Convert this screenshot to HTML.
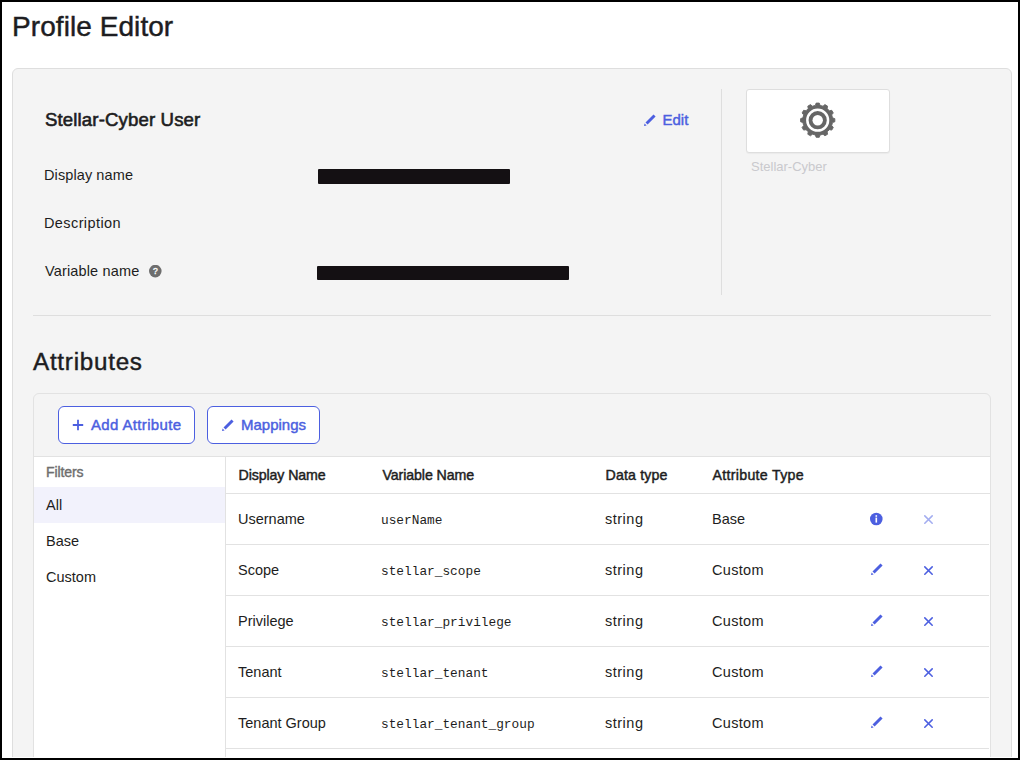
<!DOCTYPE html>
<html><head><meta charset="utf-8"><title>Profile Editor</title>
<style>
html,body{margin:0;padding:0;}
body{width:1020px;height:760px;overflow:hidden;position:relative;background:#000;font-family:"Liberation Sans", sans-serif;}
#frame{position:absolute;left:2px;top:2px;width:1016px;height:756px;background:#fff;overflow:hidden;}
#in{position:absolute;left:-2px;top:-2px;width:1020px;height:760px;}
.t{position:absolute;white-space:pre;}
</style></head><body>
<div id="frame"><div id="in">
<div style="position:absolute;left:12px;top:68px;width:1000px;height:697px;box-sizing:border-box;background:#f4f4f4;border:1px solid #dedede;border-radius:6px;"></div>
<div class="t" style="left:12px;top:8.80px;font-size:28px;line-height:35px;font-weight:400;color:#1d1d21;font-family:'Liberation Sans', sans-serif;letter-spacing:0.07px;-webkit-text-stroke:0.45px #1d1d21;">Profile Editor</div>
<div class="t" style="left:45px;top:108.06px;font-size:18.6px;line-height:23px;font-weight:400;color:#1d1d21;font-family:'Liberation Sans', sans-serif;letter-spacing:0.14px;-webkit-text-stroke:0.6px #1d1d21;">Stellar-Cyber User</div>
<svg style="position:absolute;left:643.3px;top:113.8px" width="14" height="13" viewBox="0 0 14 13"><path d="M1 12 L1.6 9.4 L3.6 11.4 Z M2.5 8.5 L10.5 0.5 L12.6 2.6 L4.6 10.6 Z" fill="#4c5fe0"/></svg>
<div class="t" style="left:662.5px;top:110.30px;font-size:15px;line-height:19px;font-weight:400;color:#4c5fe0;font-family:'Liberation Sans', sans-serif;-webkit-text-stroke:0.45px #4c5fe0;">Edit</div>
<div class="t" style="left:44px;top:165.58px;font-size:14.5px;line-height:18px;font-weight:400;color:#1d1d21;font-family:'Liberation Sans', sans-serif;letter-spacing:0.1px;">Display name</div>
<div class="t" style="left:44px;top:213.98px;font-size:14.5px;line-height:18px;font-weight:400;color:#1d1d21;font-family:'Liberation Sans', sans-serif;letter-spacing:0.4px;">Description</div>
<div class="t" style="left:45px;top:261.78px;font-size:14.5px;line-height:18px;font-weight:400;color:#1d1d21;font-family:'Liberation Sans', sans-serif;letter-spacing:0.15px;">Variable name</div>
<svg style="position:absolute;left:149px;top:265px" width="13" height="13" viewBox="0 0 13 13"><circle cx="6.3" cy="6.1" r="6.3" fill="#6e6e6e"/><text x="6.4" y="9.1" text-anchor="middle" font-family="Liberation Sans" font-weight="400" font-size="8.6" stroke="#fff" stroke-width="0.35" fill="#fff">?</text></svg>
<div style="position:absolute;left:318px;top:169px;width:192px;height:15px;background:#141013;border-radius:1px;"></div>
<div style="position:absolute;left:317px;top:266px;width:252px;height:14px;background:#141013;border-radius:1px;"></div>
<div style="position:absolute;left:721px;top:89px;width:1px;height:206px;background:#dedede;"></div>
<div style="position:absolute;left:746px;top:89px;width:144px;height:64px;box-sizing:border-box;background:#fff;border:1px solid #dedede;border-radius:3px;box-shadow:0 1px 1px rgba(0,0,0,0.04);"></div>
<svg style="position:absolute;left:780px;top:82px" width="76" height="76" viewBox="0 0 76 76"><path d="M35.31 23.39 L36.15 21.07 L39.25 21.07 L40.09 23.39 L43.03 24.18 L44.93 22.59 L47.60 24.14 L47.17 26.57 L49.33 28.73 L51.76 28.30 L53.31 30.97 L51.72 32.87 L52.51 35.81 L54.83 36.65 L54.83 39.75 L52.51 40.59 L51.72 43.53 L53.31 45.43 L51.76 48.10 L49.33 47.67 L47.17 49.83 L47.60 52.26 L44.93 53.81 L43.03 52.22 L40.09 53.01 L39.25 55.33 L36.15 55.33 L35.31 53.01 L32.37 52.22 L30.47 53.81 L27.80 52.26 L28.23 49.83 L26.07 47.67 L23.64 48.10 L22.09 45.43 L23.68 43.53 L22.89 40.59 L20.57 39.75 L20.57 36.65 L22.89 35.81 L23.68 32.87 L22.09 30.97 L23.64 28.30 L26.07 28.73 L28.23 26.57 L27.80 24.14 L30.47 22.59 L32.37 24.18 Z" fill="#666" stroke="#666" stroke-width="0.9" stroke-linejoin="round"/><circle cx="37.700000000000045" cy="38.2" r="10.35" fill="none" stroke="#fff" stroke-width="2.5"/><circle cx="37.700000000000045" cy="38.2" r="5.2" fill="#fff"/></svg>
<div class="t" style="left:751px;top:158.50px;font-size:13px;line-height:16px;font-weight:400;color:#c9c9cd;font-family:'Liberation Sans', sans-serif;">Stellar-Cyber</div>
<div style="position:absolute;left:33px;top:315px;width:958px;height:1px;background:#dedede;"></div>
<div class="t" style="left:33px;top:346.61px;font-size:24.2px;line-height:30px;font-weight:400;color:#1d1d21;font-family:'Liberation Sans', sans-serif;letter-spacing:0.75px;-webkit-text-stroke:0.45px #1d1d21;">Attributes</div>
<div style="position:absolute;left:33px;top:393px;width:958px;height:372px;box-sizing:border-box;background:#f4f4f4;border:1px solid #e2e2e2;border-radius:6px;"></div>
<div style="position:absolute;left:34px;top:456px;width:956px;height:1px;background:#e2e2e2;"></div>
<div style="position:absolute;left:58px;top:406px;width:137px;height:38px;box-sizing:border-box;background:#fff;border:1px solid #4c5fe0;border-radius:6px;"></div>
<div style="position:absolute;left:207px;top:406px;width:113px;height:38px;box-sizing:border-box;background:#fff;border:1px solid #4c5fe0;border-radius:6px;"></div>
<svg style="position:absolute;left:72px;top:419px" width="12" height="12" viewBox="0 0 12 12"><path d="M6 0.8 V11.2 M0.8 6 H11.2" stroke="#4c5fe0" stroke-width="1.8"/></svg>
<div class="t" style="left:91px;top:415.10px;font-size:15px;line-height:19px;font-weight:400;color:#4c5fe0;font-family:'Liberation Sans', sans-serif;-webkit-text-stroke:0.45px #4c5fe0;letter-spacing:0.35px;">Add Attribute</div>
<svg style="position:absolute;left:221.3px;top:418.7px" width="14" height="13" viewBox="0 0 14 13"><path d="M1 12 L1.6 9.4 L3.6 11.4 Z M2.5 8.5 L10.5 0.5 L12.6 2.6 L4.6 10.6 Z" fill="#4c5fe0"/></svg>
<div class="t" style="left:241px;top:415.30px;font-size:15px;line-height:19px;font-weight:400;color:#4c5fe0;font-family:'Liberation Sans', sans-serif;-webkit-text-stroke:0.45px #4c5fe0;letter-spacing:0.0px;">Mappings</div>
<div style="position:absolute;left:34px;top:457px;width:191px;height:300px;background:#fff;"></div>
<div style="position:absolute;left:225px;top:457px;width:1px;height:300px;background:#e2e2e2;"></div>
<div class="t" style="left:46px;top:462.95px;font-size:14px;line-height:18px;font-weight:400;color:#6e6e6e;font-family:'Liberation Sans', sans-serif;-webkit-text-stroke:0.4px #6e6e6e;letter-spacing:-0.1px;">Filters</div>
<div style="position:absolute;left:34px;top:487px;width:191px;height:36px;background:#f2f2fc;"></div>
<div class="t" style="left:46px;top:495.98px;font-size:14.5px;line-height:18px;font-weight:400;color:#1d1d21;font-family:'Liberation Sans', sans-serif;">All</div>
<div class="t" style="left:46px;top:531.98px;font-size:14.5px;line-height:18px;font-weight:400;color:#1d1d21;font-family:'Liberation Sans', sans-serif;">Base</div>
<div class="t" style="left:46px;top:567.98px;font-size:14.5px;line-height:18px;font-weight:400;color:#1d1d21;font-family:'Liberation Sans', sans-serif;">Custom</div>
<div style="position:absolute;left:226px;top:457px;width:764px;height:300px;background:#fff;"></div>
<div style="position:absolute;left:226px;top:493px;width:764px;height:1px;background:#e2e2e2;"></div>
<div class="t" style="left:238.5px;top:465.68px;font-size:14.2px;line-height:18px;font-weight:400;color:#1d1d21;font-family:'Liberation Sans', sans-serif;-webkit-text-stroke:0.45px #1d1d21;letter-spacing:-0.1px;">Display Name</div>
<div class="t" style="left:382.5px;top:465.68px;font-size:14.2px;line-height:18px;font-weight:400;color:#1d1d21;font-family:'Liberation Sans', sans-serif;-webkit-text-stroke:0.45px #1d1d21;letter-spacing:-0.1px;">Variable Name</div>
<div class="t" style="left:605.5px;top:465.68px;font-size:14.2px;line-height:18px;font-weight:400;color:#1d1d21;font-family:'Liberation Sans', sans-serif;-webkit-text-stroke:0.45px #1d1d21;letter-spacing:0.15px;">Data type</div>
<div class="t" style="left:712.5px;top:465.68px;font-size:14.2px;line-height:18px;font-weight:400;color:#1d1d21;font-family:'Liberation Sans', sans-serif;-webkit-text-stroke:0.45px #1d1d21;letter-spacing:0.3px;">Attribute Type</div>
<div class="t" style="left:238px;top:509.78px;font-size:14.5px;line-height:18px;font-weight:400;color:#1d1d21;font-family:'Liberation Sans', sans-serif;">Username</div>
<div class="t" style="left:381px;top:513.19px;font-size:12.8px;line-height:16px;font-weight:400;color:#1d1d21;font-family:'Liberation Mono', monospace;">userName</div>
<div class="t" style="left:605px;top:509.78px;font-size:14.5px;line-height:18px;font-weight:400;color:#1d1d21;font-family:'Liberation Sans', sans-serif;letter-spacing:0.5px;">string</div>
<div class="t" style="left:712px;top:509.78px;font-size:14.5px;line-height:18px;font-weight:400;color:#1d1d21;font-family:'Liberation Sans', sans-serif;">Base</div>
<svg style="position:absolute;left:869px;top:511.8px" width="14" height="14" viewBox="0 0 14 14"><circle cx="7.3" cy="7" r="6.3" fill="#4c5fe0"/><rect x="6.5" y="5.6" width="1.6" height="5" fill="#fff"/><rect x="6.5" y="3.2" width="1.6" height="1.6" fill="#fff"/></svg>
<svg style="position:absolute;left:922px;top:512.8px" width="13" height="13" viewBox="0 0 13 13"><path d="M2.8 2.9 L10.2 10.2 M10.2 2.9 L2.8 10.2" stroke="#a3adf0" stroke-width="1.55" stroke-linecap="round"/></svg>
<div style="position:absolute;left:226px;top:544px;width:763px;height:1px;background:#e2e2e2;"></div>
<div class="t" style="left:238px;top:560.78px;font-size:14.5px;line-height:18px;font-weight:400;color:#1d1d21;font-family:'Liberation Sans', sans-serif;">Scope</div>
<div class="t" style="left:381px;top:564.19px;font-size:12.8px;line-height:16px;font-weight:400;color:#1d1d21;font-family:'Liberation Mono', monospace;">stellar_scope</div>
<div class="t" style="left:605px;top:560.78px;font-size:14.5px;line-height:18px;font-weight:400;color:#1d1d21;font-family:'Liberation Sans', sans-serif;letter-spacing:0.5px;">string</div>
<div class="t" style="left:712px;top:560.78px;font-size:14.5px;line-height:18px;font-weight:400;color:#1d1d21;font-family:'Liberation Sans', sans-serif;letter-spacing:0.3px;">Custom</div>
<svg style="position:absolute;left:870.3px;top:563.4px" width="14" height="13" viewBox="0 0 14 13"><path d="M1 12 L1.6 9.4 L3.6 11.4 Z M2.5 8.5 L10.5 0.5 L12.6 2.6 L4.6 10.6 Z" fill="#4c5fe0"/></svg>
<svg style="position:absolute;left:922px;top:563.8px" width="13" height="13" viewBox="0 0 13 13"><path d="M2.8 2.9 L10.2 10.2 M10.2 2.9 L2.8 10.2" stroke="#4c5fe0" stroke-width="1.55" stroke-linecap="round"/></svg>
<div style="position:absolute;left:226px;top:595px;width:763px;height:1px;background:#e2e2e2;"></div>
<div class="t" style="left:238px;top:611.78px;font-size:14.5px;line-height:18px;font-weight:400;color:#1d1d21;font-family:'Liberation Sans', sans-serif;">Privilege</div>
<div class="t" style="left:381px;top:615.19px;font-size:12.8px;line-height:16px;font-weight:400;color:#1d1d21;font-family:'Liberation Mono', monospace;">stellar_privilege</div>
<div class="t" style="left:605px;top:611.78px;font-size:14.5px;line-height:18px;font-weight:400;color:#1d1d21;font-family:'Liberation Sans', sans-serif;letter-spacing:0.5px;">string</div>
<div class="t" style="left:712px;top:611.78px;font-size:14.5px;line-height:18px;font-weight:400;color:#1d1d21;font-family:'Liberation Sans', sans-serif;letter-spacing:0.3px;">Custom</div>
<svg style="position:absolute;left:870.3px;top:614.4px" width="14" height="13" viewBox="0 0 14 13"><path d="M1 12 L1.6 9.4 L3.6 11.4 Z M2.5 8.5 L10.5 0.5 L12.6 2.6 L4.6 10.6 Z" fill="#4c5fe0"/></svg>
<svg style="position:absolute;left:922px;top:614.8px" width="13" height="13" viewBox="0 0 13 13"><path d="M2.8 2.9 L10.2 10.2 M10.2 2.9 L2.8 10.2" stroke="#4c5fe0" stroke-width="1.55" stroke-linecap="round"/></svg>
<div style="position:absolute;left:226px;top:646px;width:763px;height:1px;background:#e2e2e2;"></div>
<div class="t" style="left:238px;top:662.78px;font-size:14.5px;line-height:18px;font-weight:400;color:#1d1d21;font-family:'Liberation Sans', sans-serif;">Tenant</div>
<div class="t" style="left:381px;top:666.19px;font-size:12.8px;line-height:16px;font-weight:400;color:#1d1d21;font-family:'Liberation Mono', monospace;">stellar_tenant</div>
<div class="t" style="left:605px;top:662.78px;font-size:14.5px;line-height:18px;font-weight:400;color:#1d1d21;font-family:'Liberation Sans', sans-serif;letter-spacing:0.5px;">string</div>
<div class="t" style="left:712px;top:662.78px;font-size:14.5px;line-height:18px;font-weight:400;color:#1d1d21;font-family:'Liberation Sans', sans-serif;letter-spacing:0.3px;">Custom</div>
<svg style="position:absolute;left:870.3px;top:665.4px" width="14" height="13" viewBox="0 0 14 13"><path d="M1 12 L1.6 9.4 L3.6 11.4 Z M2.5 8.5 L10.5 0.5 L12.6 2.6 L4.6 10.6 Z" fill="#4c5fe0"/></svg>
<svg style="position:absolute;left:922px;top:665.8px" width="13" height="13" viewBox="0 0 13 13"><path d="M2.8 2.9 L10.2 10.2 M10.2 2.9 L2.8 10.2" stroke="#4c5fe0" stroke-width="1.55" stroke-linecap="round"/></svg>
<div style="position:absolute;left:226px;top:697px;width:763px;height:1px;background:#e2e2e2;"></div>
<div class="t" style="left:238px;top:713.78px;font-size:14.5px;line-height:18px;font-weight:400;color:#1d1d21;font-family:'Liberation Sans', sans-serif;">Tenant Group</div>
<div class="t" style="left:381px;top:717.19px;font-size:12.8px;line-height:16px;font-weight:400;color:#1d1d21;font-family:'Liberation Mono', monospace;">stellar_tenant_group</div>
<div class="t" style="left:605px;top:713.78px;font-size:14.5px;line-height:18px;font-weight:400;color:#1d1d21;font-family:'Liberation Sans', sans-serif;letter-spacing:0.5px;">string</div>
<div class="t" style="left:712px;top:713.78px;font-size:14.5px;line-height:18px;font-weight:400;color:#1d1d21;font-family:'Liberation Sans', sans-serif;letter-spacing:0.3px;">Custom</div>
<svg style="position:absolute;left:870.3px;top:716.4px" width="14" height="13" viewBox="0 0 14 13"><path d="M1 12 L1.6 9.4 L3.6 11.4 Z M2.5 8.5 L10.5 0.5 L12.6 2.6 L4.6 10.6 Z" fill="#4c5fe0"/></svg>
<svg style="position:absolute;left:922px;top:716.8px" width="13" height="13" viewBox="0 0 13 13"><path d="M2.8 2.9 L10.2 10.2 M10.2 2.9 L2.8 10.2" stroke="#4c5fe0" stroke-width="1.55" stroke-linecap="round"/></svg>
<div style="position:absolute;left:226px;top:748px;width:763px;height:1px;background:#e2e2e2;"></div>
<div style="position:absolute;left:0;top:757px;width:1020px;height:1px;background:#fff"></div>
</div></div>
</body></html>
